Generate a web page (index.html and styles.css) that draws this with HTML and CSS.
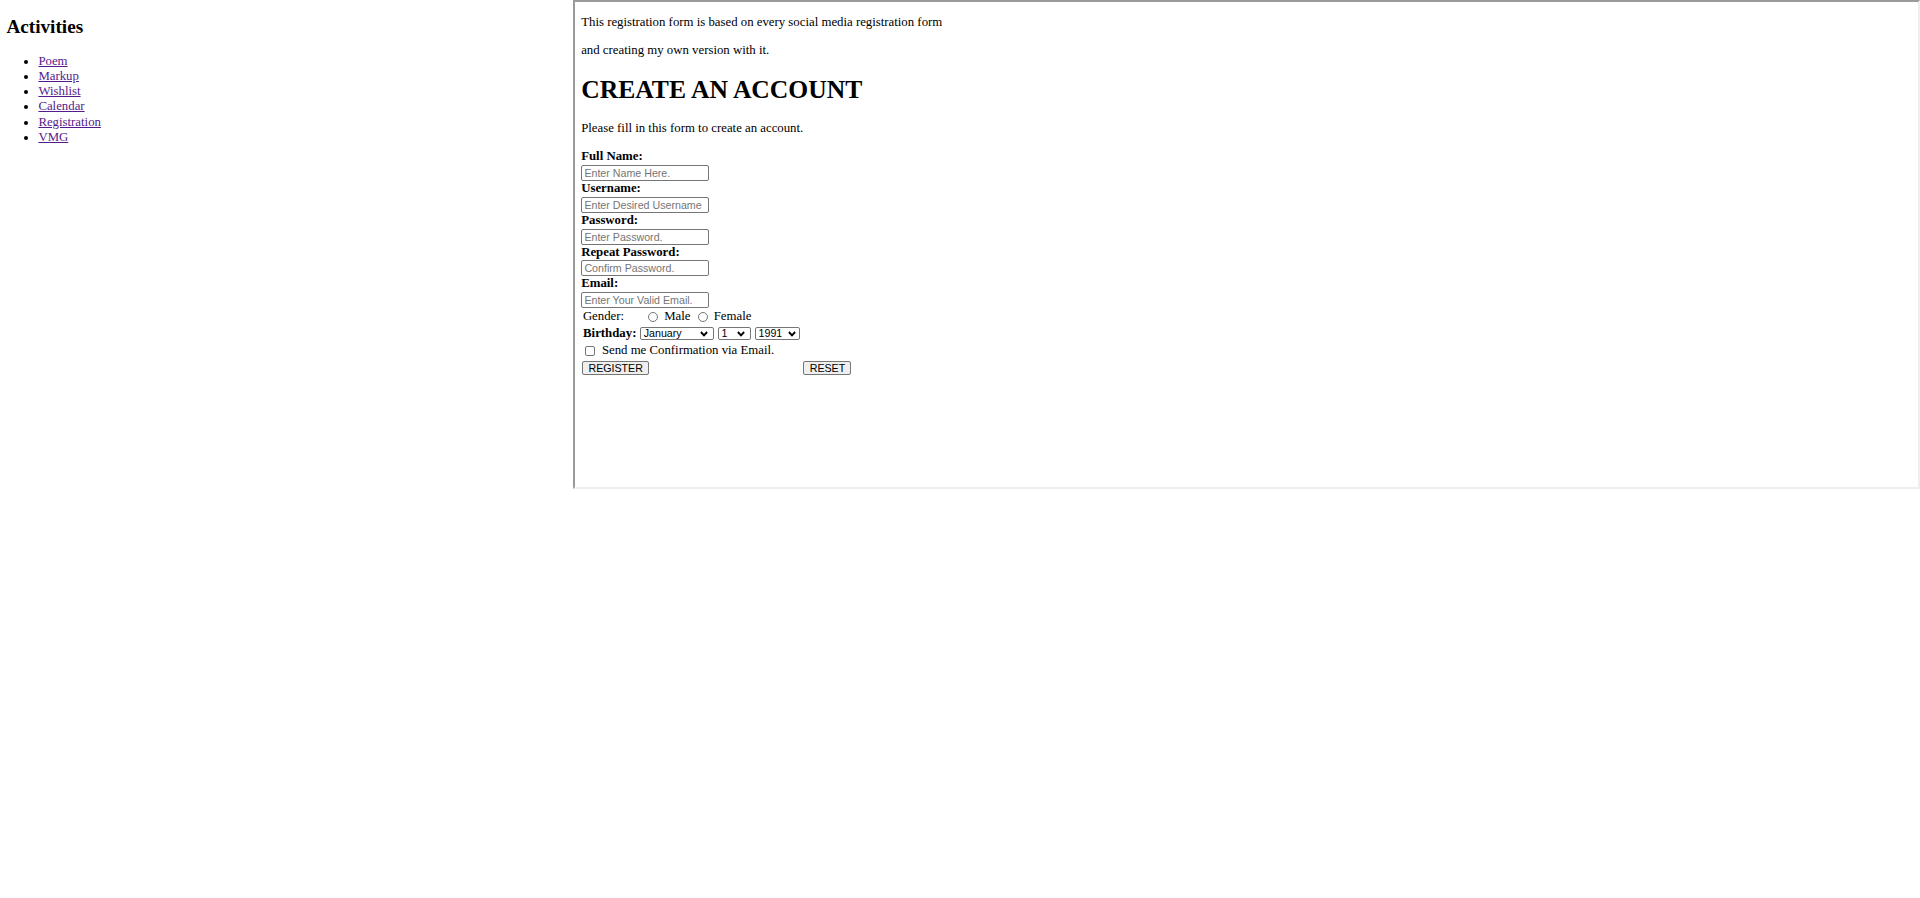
FILE: index.html
```html
<!DOCTYPE html>
<html>
<head>
<meta charset="utf-8">
<title>Activities</title>
<link rel="stylesheet" href="styles.css">
</head>
<body>
<div class="page">
  <nav class="sidebar">
    <h2 class="side-title">Activities</h2>
    <ul class="side-list">
      <li><a href="#">Poem</a></li>
      <li><a href="#">Markup</a></li>
      <li><a href="#">Wishlist</a></li>
      <li><a href="#">Calendar</a></li>
      <li><a href="#">Registration</a></li>
      <li><a href="#">VMG</a></li>
    </ul>
  </nav>
  <main class="frame">
    <p class="para">This registration form is based on every social media registration form</p>
    <p class="para">and creating my own version with it.</p>
    <h1 class="title">CREATE AN ACCOUNT</h1>
    <p class="para">Please fill in this form to create an account.</p>
    <form class="form">
      <label class="field-label">Full Name:</label>
      <input class="text-input" type="text" placeholder="Enter Name Here.">
      <label class="field-label">Username:</label>
      <input class="text-input" type="text" placeholder="Enter Desired Username">
      <label class="field-label">Password:</label>
      <input class="text-input" type="password" placeholder="Enter Password.">
      <label class="field-label">Repeat Password:</label>
      <input class="text-input" type="password" placeholder="Confirm Password.">
      <label class="field-label">Email:</label>
      <input class="text-input" type="email" placeholder="Enter Your Valid Email.">

      <div class="row row-gender">
        <span class="gender-label">Gender:</span>
        <input class="radio" type="radio" name="g">
        <span class="radio-text">Male</span>
        <input class="radio radio-2" type="radio" name="g">
        <span class="radio-text">Female</span>
      </div>

      <div class="row row-birthday">
        <b class="birthday-label">Birthday:</b>
        <span class="select-wrap sel-month">
          <select class="select"><option>January</option></select>
          <svg class="chev" width="8" height="6" viewBox="0 0 8 6"><path d="M0.9 1 L4 4.3 L7.1 1" fill="none" stroke="#000" stroke-width="1.9"/></svg>
        </span>
        <span class="select-wrap sel-day">
          <select class="select"><option>1</option></select>
          <svg class="chev" width="8" height="6" viewBox="0 0 8 6"><path d="M0.9 1 L4 4.3 L7.1 1" fill="none" stroke="#000" stroke-width="1.9"/></svg>
        </span>
        <span class="select-wrap sel-year">
          <select class="select"><option>1991</option></select>
          <svg class="chev" width="8" height="6" viewBox="0 0 8 6"><path d="M0.9 1 L4 4.3 L7.1 1" fill="none" stroke="#000" stroke-width="1.9"/></svg>
        </span>
      </div>

      <div class="row row-check">
        <input class="checkbox" type="checkbox">
        <span class="check-text">Send me Confirmation via Email.</span>
      </div>

      <div class="row row-buttons">
        <button class="btn btn-register" type="submit">REGISTER</button>
        <button class="btn btn-reset" type="reset">RESET</button>
      </div>
    </form>
  </main>
</div>
</body>
</html>
```

FILE: styles.css
```css
html, body {
  margin: 0;
  padding: 0;
  background: #fff;
}

body {
  font-family: "Liberation Serif", "Times New Roman", serif;
  color: #000;
}

.page {
  display: flex;
  align-items: flex-start;
}

/* ---------- sidebar ---------- */
.sidebar {
  width: 573px;
  flex-shrink: 0;
  box-sizing: border-box;
  padding: 0 6.4px;
}

.side-title {
  font-size: 19.2px;
  font-weight: bold;
  line-height: 22px;
  margin: 15.9px 0;
}

.side-list {
  font-size: 12.8px;
  line-height: 15.2px;
  margin: 12.8px 0;
  padding-left: 32px;
}

.side-list a {
  color: #551a8b;
  text-decoration: underline;
}

/* ---------- framed area ---------- */
.frame {
  flex: 1;
  height: 489px;
  box-sizing: border-box;
  border-style: solid;
  border-width: 2px;
  border-color: #9a9a9a #eeeeee #eeeeee #9a9a9a;
  padding: 0 6.2px;
  font-size: 12.8px;
  line-height: 15px;
}

.para {
  margin: 12.8px 0;
}

.title {
  font-size: 25.6px;
  line-height: 29.5px;
  font-weight: bold;
  margin: 17.15px 0;
}

.form {
  display: flex;
  flex-direction: column;
  align-items: flex-start;
}

.field-label {
  display: block;
  font-weight: bold;
  height: 15px;
  line-height: 15px;
}

.text-input {
  display: block;
  box-sizing: border-box;
  width: 128px;
  height: 16px;
  margin: 0.8px 0 0 0;
  padding: 0 2.2px;
  border: 1px solid #767676;
  border-radius: 2px;
  background: #fff;
  font-family: "Liberation Sans", Arial, sans-serif;
  font-size: 10.67px;
  color: #000;
  outline: none;
}

.text-input::placeholder {
  color: #757575;
}

.row {
  display: flex;
  align-items: center;
}

/* gender */
.row-gender {
  height: 17px;
  padding-left: 1.7px;
}

.gender-label {
  width: 65.6px;
  flex-shrink: 0;
}

.radio {
  appearance: none;
  -webkit-appearance: none;
  box-sizing: border-box;
  flex-shrink: 0;
  width: 10px;
  height: 10px;
  margin: 0 5.7px 0 0;
  border: 1px solid #767676;
  border-radius: 50%;
  background: #fff;
}

.radio-2 {
  margin-left: 7.6px;
}

/* birthday */
.row-birthday {
  height: 17.2px;
  padding-left: 1.9px;
}

.birthday-label {
  margin-right: 3.8px;
}

.select-wrap {
  position: relative;
  display: inline-block;
  height: 13px;
  margin-right: 3.8px;
}

.select {
  appearance: none;
  -webkit-appearance: none;
  display: block;
  box-sizing: border-box;
  height: 13px;
  margin: 0;
  padding: 0 0 0 2.5px;
  border: 1px solid #767676;
  border-radius: 2px;
  background: #fff;
  font-family: "Liberation Sans", Arial, sans-serif;
  font-size: 10.67px;
  line-height: 11px;
  color: #000;
}

.sel-month .select { width: 74px; }
.sel-day .select { width: 33.3px; }
.sel-year .select { width: 45.4px; }

.chev {
  position: absolute;
  top: 3.5px;
  right: 6px;
  pointer-events: none;
}

.sel-year .chev {
  right: 4px;
}

/* checkbox */
.row-check {
  height: 16.6px;
}

.checkbox {
  appearance: none;
  -webkit-appearance: none;
  box-sizing: border-box;
  flex-shrink: 0;
  width: 10px;
  height: 10px;
  margin: 0 6.7px 0 4px;
  border: 1px solid #767676;
  border-radius: 2px;
  background: #fff;
}

/* buttons */
.row-buttons {
  margin-top: 1.7px;
  padding-left: 1.3px;
}

.btn {
  box-sizing: border-box;
  height: 14.7px;
  margin: 0;
  padding: 0 4.8px;
  border: 1px solid #767676;
  border-radius: 2px;
  background: #efefef;
  font-family: "Liberation Sans", Arial, sans-serif;
  font-size: 10.67px;
  line-height: 12px;
  color: #000;
}

.btn-register {
  width: 66.4px;
}

.btn-reset {
  width: 48px;
  margin-left: 154.6px;
}
```
